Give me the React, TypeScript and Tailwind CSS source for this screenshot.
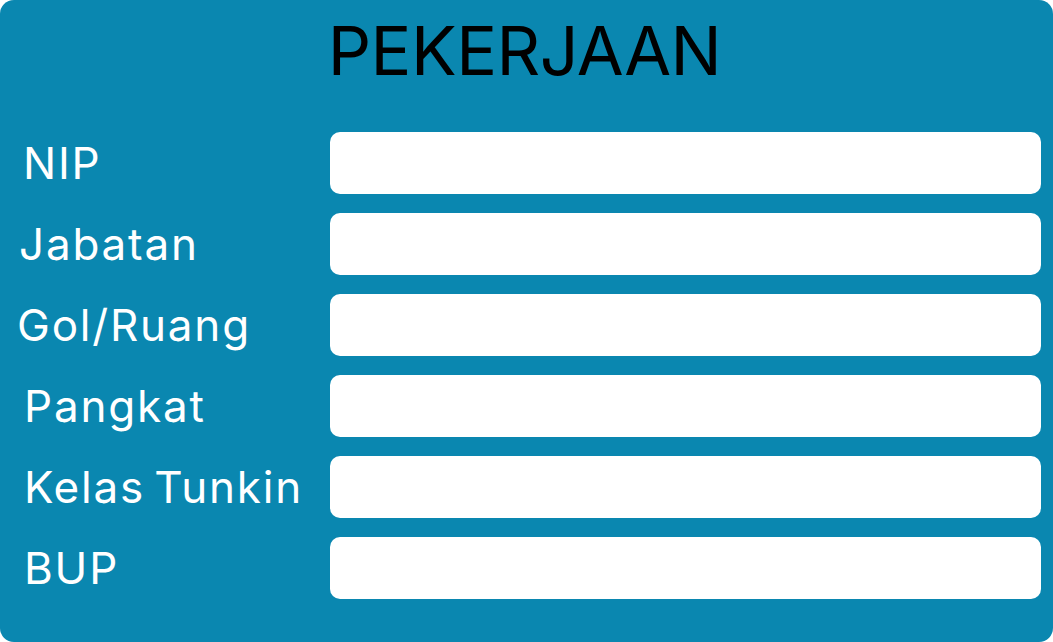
import React from "react";

const rows: { label: string; pl: string }[] = [
  { label: "NIP", pl: "pl-[23px]" },
  { label: "Jabatan", pl: "pl-[19px]" },
  { label: "Gol/Ruang", pl: "pl-[17px]" },
  { label: "Pangkat", pl: "pl-[24px]" },
  { label: "Kelas Tunkin", pl: "pl-[24px]" },
  { label: "BUP", pl: "pl-[24px]" },
];

export default function App() {
  return (
    <div
      className="w-[1053px] h-[642px] bg-[#0a87b0] rounded-[14px] flex flex-col"
      style={{ fontFamily: "Inter, 'Open Sans', sans-serif" }}
    >
      <div className="h-[100px] flex items-center justify-center pr-[4px]">
        <h1 className="text-[68px] leading-none font-normal text-black tracking-[-0.5px]">
          PEKERJAAN
        </h1>
      </div>
      <div className="flex flex-col gap-[19px] pt-[32px] pr-[12px]">
        {rows.map((r) => (
          <div key={r.label} className="flex items-center h-[62px]">
            <div
              className={`w-[330px] shrink-0 ${r.pl} text-white text-[44px] leading-none tracking-[1.8px] [word-spacing:-5px]`}
            >
              {r.label}
            </div>
            <input
              type="text"
              className="flex-1 h-[62px] rounded-[10px] bg-white outline-none border-0 px-4"
            />
          </div>
        ))}
      </div>
    </div>
  );
}
